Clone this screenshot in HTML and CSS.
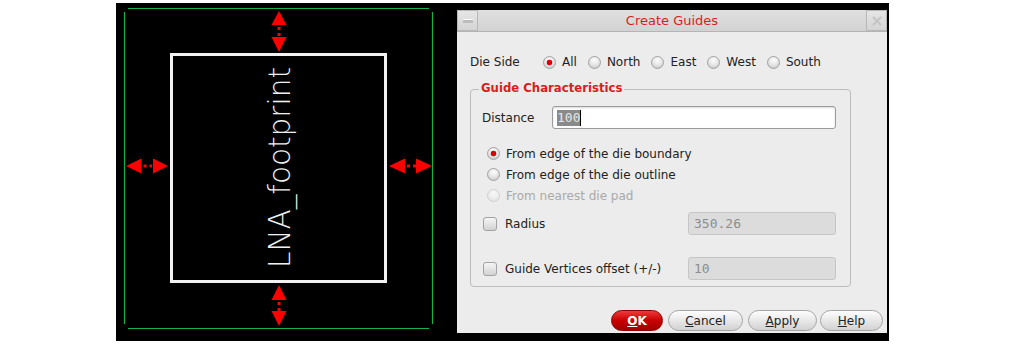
FILE: index.html
```html
<!DOCTYPE html>
<html lang="en">
<head>
    <meta charset="UTF-8">
    <meta name="viewport" content="width=device-width, initial-scale=1.0">
    <title>Create Guides</title>
    <link rel="stylesheet" href="styles.css">
</head>
<body>
    <div class="screen">
        <!-- Layout canvas with the footprint and guide arrows -->
        <div class="canvas">
            <svg width="340" height="338" viewBox="0 0 340 338">
                <g class="guide-line">
                    <line x1="12" y1="5.5" x2="313" y2="5.5"/>
                    <line x1="8.5" y1="9" x2="8.5" y2="321"/>
                    <line x1="316.5" y1="9" x2="316.5" y2="321"/>
                    <line x1="12" y1="325.5" x2="313" y2="325.5"/>
                </g>
                <rect class="footprint" x="55.5" y="51.5" width="214" height="227"/>
                <text class="footprint-name" transform="translate(174,265) rotate(-90)" textLength="201" lengthAdjust="spacingAndGlyphs">LNA_footprint</text>
                <g class="arrow">
                    <polygon points="163,8 155.5,22 170.5,22"/>
                    <polygon points="155.5,34 170.5,34 163,49"/>
                    <polygon points="163,282 155.5,297 170.5,297"/>
                    <polygon points="155.5,308 170.5,308 163,323"/>
                    <polygon points="10,163 25.5,155.5 25.5,170.5"/>
                    <polygon points="37,155.5 37,170.5 52,163"/>
                    <polygon points="273,163 289,155.5 289,170.5"/>
                    <polygon points="300,155.5 300,170.5 316,163"/>
                </g>
                <g class="arrow-dots">
                    <line x1="163" y1="24" x2="163" y2="33"/>
                    <line x1="163" y1="299" x2="163" y2="308"/>
                    <line x1="27.5" y1="163" x2="36" y2="163"/>
                    <line x1="291" y1="163" x2="300" y2="163"/>
                </g>
            </svg>
        </div>

        <!-- Create Guides form -->
        <div class="dialog">
            <div class="titlebar">
                <span class="tb-btn"><span class="tb-min"></span></span>
                <span class="title">Create Guides</span>
                <span class="tb-btn">
                    <svg width="12" height="12" viewBox="0 0 12 12">
                        <path d="M2 2 L10 10 M10 2 L2 10" stroke="#c4c4c4" stroke-width="2" fill="none"/>
                    </svg>
                </span>
            </div>

            <div class="dialog-body">
                <div class="die-row">
                    <span class="die-label">Die Side</span>
                    <label class="radio"><span class="radio-dot on"></span>All</label>
                    <label class="radio"><span class="radio-dot"></span>North</label>
                    <label class="radio"><span class="radio-dot"></span>East</label>
                    <label class="radio"><span class="radio-dot"></span>West</label>
                    <label class="radio"><span class="radio-dot"></span>South</label>
                </div>

                <div class="group">
                    <span class="legend">Guide Characteristics</span>

                    <div class="field-row">
                        <span class="field-label">Distance</span>
                        <div class="input"><span class="selected">100</span><span class="caret"></span></div>
                    </div>

                    <div class="radio-list">
                        <label class="radio"><span class="radio-dot on"></span>From edge of the die boundary</label>
                        <label class="radio"><span class="radio-dot"></span>From edge of the die outline</label>
                        <label class="radio disabled"><span class="radio-dot"></span>From nearest die pad</label>
                    </div>

                    <div class="check-row radius-row">
                        <span class="check"></span>
                        <span class="check-label">Radius</span>
                        <div class="input disabled">350.26</div>
                    </div>

                    <div class="check-row offset-row">
                        <span class="check"></span>
                        <span class="check-label">Guide Vertices offset (+/-)</span>
                        <div class="input disabled">10</div>
                    </div>
                </div>

                <div class="buttons">
                    <button class="btn btn-ok" type="button"><u>O</u>K</button>
                    <button class="btn btn-cancel" type="button"><u>C</u>ancel</button>
                    <button class="btn btn-apply" type="button"><u>A</u>pply</button>
                    <button class="btn btn-help" type="button"><u>H</u>elp</button>
                </div>
            </div>
        </div>
    </div>
</body>
</html>
```

FILE: styles.css
```css
/* Basic page styling */
body {
    margin: 0;
    background-color: #fff;
    font-family: "DejaVu Sans", sans-serif;
    font-size: 12px;
    color: #222;
}

/* Black screen area holding canvas and dialog */
.screen {
    display: flex;
    width: 773px;
    height: 338px;
    margin: 3px 0 0 116px;
    background-color: #000;
}

/* Canvas styling */
.canvas {
    width: 340px;
    flex-shrink: 0;
}

.canvas svg {
    display: block;
}

.guide-line line {
    stroke: #16b14c;
    stroke-width: 1.2;
}

.footprint {
    fill: none;
    stroke: #f2f2f2;
    stroke-width: 3;
}

.footprint-name {
    fill: #f0f0f0;
    font-family: "DejaVu Sans", sans-serif;
    font-weight: 200;
    font-size: 31px;
}

.arrow polygon {
    fill: #ff0000;
}

.arrow-dots line {
    stroke: #ff0000;
    stroke-width: 3;
    stroke-dasharray: 3 3;
}

/* Dialog styling */
.dialog {
    display: flex;
    flex-direction: column;
    width: 430px;
    height: 323px;
    margin: 7px 0 0 1px;
    background-color: #ececec;
    box-sizing: border-box;
}

.titlebar {
    display: flex;
    align-items: center;
    height: 22px;
    background: linear-gradient(#e0e0e0, #d2d2d2);
    border-bottom: 1px solid #b4b4b4;
    box-sizing: border-box;
}

.tb-btn {
    display: flex;
    align-items: center;
    justify-content: center;
    width: 21px;
    height: 21px;
    border: 1px solid #b8b8b8;
    box-sizing: border-box;
    background: linear-gradient(#e6e6e6, #d4d4d4);
}

.tb-min {
    width: 10px;
    height: 3px;
    background-color: #bcbcbc;
    border-top: 1px solid #fafafa;
}

.title {
    flex: 1;
    text-align: center;
    color: #dc1c1c;
    font-size: 13px;
}

.dialog-body {
    padding: 0 4px 0 13px;
}

/* Die side row */
.die-row {
    display: flex;
    align-items: center;
    height: 18px;
    margin-top: 21px;
}

.die-label {
    width: 73px;
}

.radio {
    display: flex;
    align-items: center;
    gap: 6px;
    margin-right: 11px;
}

.radio-dot {
    width: 13px;
    height: 13px;
    border-radius: 50%;
    border: 1px solid #a2a2a2;
    box-sizing: border-box;
    background: radial-gradient(circle at 50% 30%, #ffffff, #e2e2e2 55%, #bcbcbc);
}

.radio-dot.on {
    background: radial-gradient(circle at 50% 50%, #e80000 0, #d00000 2.5px, transparent 3.2px),
                radial-gradient(circle at 50% 30%, #ffffff, #e2e2e2 55%, #bcbcbc);
}

.radio.disabled {
    color: #a9a9a9;
}

.radio.disabled .radio-dot {
    border-color: #d0d0d0;
    background: radial-gradient(circle at 50% 30%, #f8f8f8, #ececec 55%, #dcdcdc);
}

/* Guide characteristics group */
.group {
    position: relative;
    width: 381px;
    margin-top: 18px;
    padding: 16px 14px 6px 11px;
    border: 1px solid #bdbdbd;
    border-radius: 4px;
    box-sizing: border-box;
}

.legend {
    position: absolute;
    top: -9px;
    left: 8px;
    padding: 0 2px;
    background-color: #ececec;
    color: #dc1c1c;
    font-weight: bold;
    font-size: 11.7px;
}

.field-row {
    display: flex;
    align-items: center;
    height: 23px;
}

.field-label {
    width: 70px;
}

.input {
    display: flex;
    align-items: center;
    flex: 1;
    height: 23px;
    padding-left: 4px;
    border: 1px solid #9c9c9c;
    border-radius: 3px;
    background-color: #fff;
    box-shadow: inset 0 1px 2px rgba(0, 0, 0, 0.15);
    box-sizing: border-box;
    font-family: "DejaVu Sans Mono", monospace;
    font-size: 13px;
}

.selected {
    background-color: #8a8a8a;
    color: #e6e6e6;
    line-height: 16px;
}

.caret {
    width: 1px;
    height: 16px;
    background-color: #000;
}

.input.disabled {
    flex: none;
    width: 148px;
    padding-left: 5px;
    border-color: #c6c6c6;
    background-color: #dcdcdc;
    box-shadow: none;
    color: #8c8c8c;
}

.radio-list {
    margin-top: 14px;
    padding-left: 5px;
}

.radio-list .radio {
    height: 21px;
    gap: 6px;
}

.check-row {
    display: flex;
    align-items: center;
    height: 23px;
}

.radius-row {
    margin-top: 6px;
}

.offset-row {
    margin-top: 22px;
}

.check {
    width: 14px;
    height: 14px;
    margin-left: 1px;
    border: 1px solid #a2a2a2;
    border-radius: 3px;
    box-sizing: border-box;
    background: linear-gradient(#f6f6f6, #d2d2d2);
}

.check-label {
    flex: 1;
    margin-left: 8px;
}

/* Button styling */
.buttons {
    display: flex;
    justify-content: flex-end;
    margin-top: 23px;
}

.btn {
    height: 21px;
    margin-left: 5px;
    padding: 0;
    border: 1px solid #a4a4a4;
    border-radius: 11px;
    background: linear-gradient(#fdfdfd, #e8e8e8 50%, #d2d2d2);
    font-family: "DejaVu Sans", sans-serif;
    font-size: 12px;
    color: #222;
    cursor: pointer;
}

.btn-ok {
    width: 52px;
    border-color: #8c0000;
    background: linear-gradient(#ee3a3a, #c80000 50%, #a40000);
    color: #fff;
    font-weight: bold;
}

.btn-cancel {
    width: 75px;
}

.btn-apply {
    width: 69px;
}

.btn-help {
    width: 63px;
    margin-left: 3px;
}
```
